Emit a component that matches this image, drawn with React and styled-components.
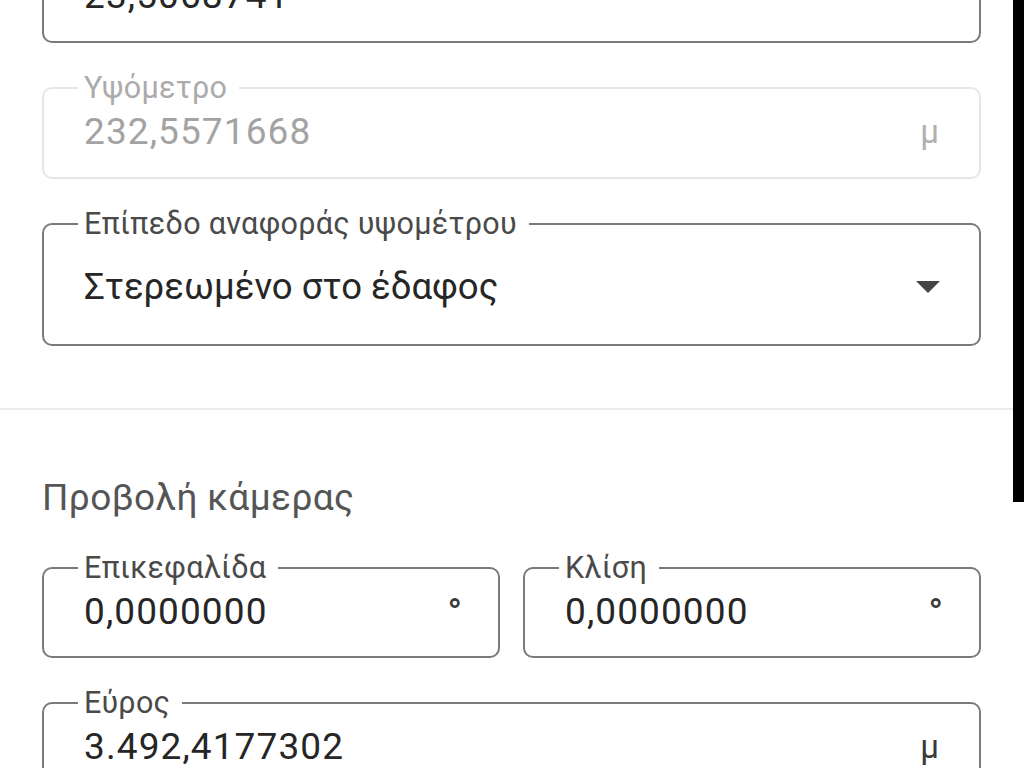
import React from "react";
import styled, { createGlobalStyle } from "styled-components";

const Global = createGlobalStyle`
  html, body { margin: 0; padding: 0; background: #ffffff; overflow: hidden; }
  body { font-family: Roboto, "Noto Sans", "Liberation Sans", sans-serif; }
`;

const Page = styled.div`
  position: relative;
  width: 1024px;
  height: 768px;
  overflow: hidden;
  background: #fff;
`;

const Content = styled.div`
  margin-top: -64px;
  width: 1013px;
`;

const Section = styled.div`
  display: flex;
  flex-direction: column;
  gap: 29px;
  padding: ${(p) => p.$pad || "0 32px 0 42px"};
`;

const Divider = styled.div`
  height: 2px;
  background: #ececec;
`;

const Heading = styled.h2`
  margin: 0 0 5px 0;
  height: 40px;
  line-height: 40px;
  font-size: 37px;
  font-weight: 400;
  color: #555555;
  letter-spacing: 0.4px;
`;

const Row = styled.div`
  display: grid;
  grid-template-columns: 1fr 1fr;
  gap: 23px;
`;

const Field = styled.fieldset`
  margin: 0;
  padding: 0 40px ${(p) => p.$bottom || 25}px 40px;
  min-width: 0;
  border: 2px solid ${(p) => (p.$disabled ? "#e6e6e6" : "#7a7a7a")};
  border-radius: 10px;
`;

const Legend = styled.legend`
  margin-left: -6px;
  padding: 0 12px 0 6px;
  height: 32px;
  line-height: 32px;
  font-size: 30.5px;
  letter-spacing: 0.3px;
  color: ${(p) => (p.$disabled ? "#ababab" : "#4a4a4a")};
`;

const ValueRow = styled.div`
  margin-top: ${(p) => p.$top || 8}px;
  height: 40px;
  display: flex;
  align-items: center;
  justify-content: space-between;
`;

const Value = styled.span`
  font-size: ${(p) => (p.$text ? 36.5 : 37)}px;
  letter-spacing: ${(p) => (p.$text ? 0 : 1.1)}px;
  line-height: 40px;
  color: ${(p) => (p.$disabled ? "#a3a3a3" : "#262626")};
`;

const Unit = styled.span`
  font-size: ${(p) => (p.$deg ? 38 : 33)}px;
  font-weight: ${(p) => (p.$deg ? 500 : 400)};
  line-height: 40px;
  margin-right: ${(p) => (p.$deg ? -4 : 0)}px;
  align-self: center;
  margin-top: ${(p) => (p.$deg ? 2 : 0)}px;
  color: ${(p) => (p.$disabled ? "#b0b0b0" : "#3a3a3a")};
`;

const Arrow = styled.svg`
  width: 26px;
  height: 14px;
  margin-right: -2px;
`;

const ScrollThumb = styled.div`
  position: absolute;
  top: 0;
  right: 0;
  width: 11px;
  height: 502px;
  background: #000;
`;

function TextField({ label, value, unit, disabled, deg, bottom }) {
  return (
    <Field $disabled={disabled} $bottom={bottom}>
      <Legend $disabled={disabled}>{label}</Legend>
      <ValueRow>
        <Value $disabled={disabled}>{value}</Value>
        {unit && (
          <Unit $disabled={disabled} $deg={deg}>
            {unit}
          </Unit>
        )}
      </ValueRow>
    </Field>
  );
}

function SelectField({ label, value }) {
  return (
    <Field $bottom={37}>
      <Legend>{label}</Legend>
      <ValueRow $top={27}>
        <Value $text>{value}</Value>
        <Arrow viewBox="0 0 26 14">
          <path d="M1 1 L25 1 L13 13 Z" fill="#454545" />
        </Arrow>
      </ValueRow>
    </Field>
  );
}

export default function App() {
  return (
    <Page>
      <Global />
      <Content>
        <Section $pad="0 32px 62px 42px">
          <TextField label="Γεωγραφικό πλάτος" value="23,5068741" />
          <TextField label="Υψόμετρο" value="232,5571668" unit="μ" disabled />
          <SelectField label="Επίπεδο αναφοράς υψομέτρου" value="Στερεωμένο στο έδαφος" />
        </Section>
        <Divider />
        <Section $pad="68px 32px 0 42px">
          <Heading>Προβολή κάμερας</Heading>
          <Row>
            <TextField label="Επικεφαλίδα" value="0,0000000" unit="°" deg bottom={24} />
            <TextField label="Κλίση" value="0,0000000" unit="°" deg bottom={24} />
          </Row>
          <TextField label="Εύρος" value="3.492,4177302" unit="μ" />
        </Section>
      </Content>
      <ScrollThumb />
    </Page>
  );
}
